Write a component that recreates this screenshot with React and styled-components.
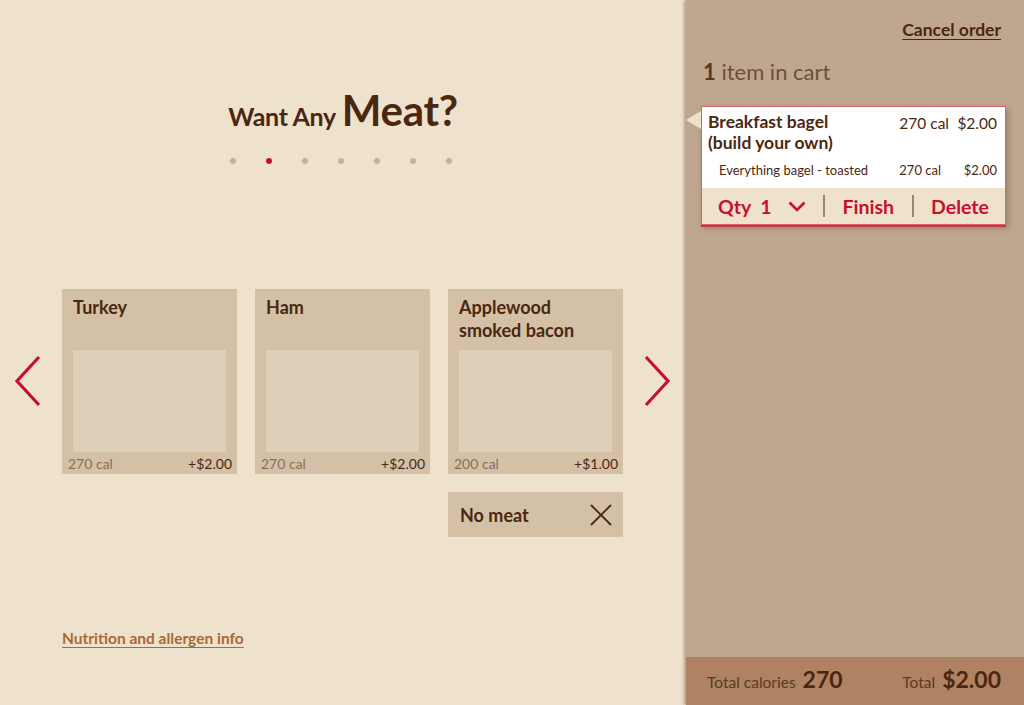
import styled, { createGlobalStyle } from "styled-components";

const GlobalStyle = createGlobalStyle`
  html, body {
    margin: 0;
    padding: 0;
    height: 100%;
  }
  body {
    font-family: "Lato", "Liberation Sans", sans-serif;
    color: #4b2711;
  }
  #root {
    height: 100%;
  }
`;

const meats = [
  { name: "Turkey", cal: "270 cal", price: "+$2.00" },
  { name: "Ham", cal: "270 cal", price: "+$2.00" },
  { name: "Applewood smoked bacon", cal: "200 cal", price: "+$1.00" },
];

function Chevron({ dir }) {
  const d = dir === "left" ? "M25 2 L3 26 L25 50" : "M2 2 L24 26 L2 50";
  return (
    <svg width="27" height="53" viewBox="0 0 27 53">
      <path d={d} fill="none" stroke="#c8102e" strokeWidth="3.2" />
    </svg>
  );
}

function App() {
  return (
    <>
      <GlobalStyle />
      <Screen>
        {/* ***** menu side ***** */}
        <Main>
          <Title>
            <small>Want Any</small> Meat?
          </Title>
          <Dots>
            {[0, 1, 2, 3, 4, 5, 6].map((i) => (
              <Dot key={i} active={i === 1} />
            ))}
          </Dots>

          <Carousel>
            <ArrowButton side="start">
              <Chevron dir="left" />
            </ArrowButton>
            {meats.map((m) => (
              <Card key={m.name}>
                <CardTitle>{m.name}</CardTitle>
                <Placeholder />
                <CardFooter>
                  <span>{m.cal}</span>
                  <Price>{m.price}</Price>
                </CardFooter>
              </Card>
            ))}
            <ArrowButton side="end">
              <Chevron dir="right" />
            </ArrowButton>
            <NoMeat>
              No meat
              <svg width="22" height="22" viewBox="0 0 22 22">
                <path d="M1 1 L21 21 M21 1 L1 21" stroke="#4b2711" strokeWidth="1.8" />
              </svg>
            </NoMeat>
          </Carousel>

          <NutritionLink href="#">Nutrition and allergen info</NutritionLink>
        </Main>

        {/* ***** cart side ***** */}
        <Sidebar>
          <SidebarBody>
            <CancelLink href="#">Cancel order</CancelLink>
            <CartCount>
              <strong>1</strong> item in cart
            </CartCount>
            <CartItem>
              <ItemTop>
                <ItemName>
                  Breakfast bagel
                  <br />
                  (build your own)
                </ItemName>
                <ItemFigure width="70px">270 cal</ItemFigure>
                <ItemFigure width="48px">$2.00</ItemFigure>
              </ItemTop>
              <SubLine>
                <SubName>Everything bagel - toasted</SubName>
                <SubFigure width="72px">270 cal</SubFigure>
                <SubFigure width="56px">$2.00</SubFigure>
              </SubLine>
              <ItemActions>
                <Action>
                  Qty&nbsp;&nbsp;1
                  <svg width="18" height="11" viewBox="0 0 18 11">
                    <path d="M1.5 1.5 L9 9 L16.5 1.5" fill="none" stroke="#c8102e" strokeWidth="2.6" />
                  </svg>
                </Action>
                <Divider />
                <Action>Finish</Action>
                <Divider />
                <Action>Delete</Action>
              </ItemActions>
            </CartItem>
          </SidebarBody>
          <Totals>
            <TotalGroup>
              Total calories <strong>270</strong>
            </TotalGroup>
            <TotalGroup>
              Total <strong>$2.00</strong>
            </TotalGroup>
          </Totals>
        </Sidebar>
      </Screen>
    </>
  );
}

export default App;

const Screen = styled.div`
  display: flex;
  width: 1024px;
  height: 705px;
  overflow: hidden;
`;

const Main = styled.div`
  flex: 1;
  display: flex;
  flex-direction: column;
  background: #efe2cc;
`;

const Title = styled.h1`
  margin: 85px 0 0;
  text-align: center;
  font-size: 42px;
  font-weight: 700;
  line-height: 50px;
  letter-spacing: -0.3px;

  > small {
    font-size: 25px;
    margin-right: -4px;
  }
`;

const Dots = styled.div`
  display: flex;
  justify-content: center;
  gap: 30px;
  margin: 17px 4px 0 0;
`;

const Dot = styled.span`
  width: 6px;
  height: 6px;
  border-radius: 50%;
  background: ${(p) => (p.active ? "#c8102e" : "#c4b09b")};
`;

const Carousel = styled.div`
  display: grid;
  grid-template-columns: 30px repeat(3, 175px) 30px;
  grid-template-rows: 185px 45px;
  column-gap: 18px;
  row-gap: 18px;
  margin: 125px 0 0 14px;
`;

const ArrowButton = styled.div`
  align-self: center;
  justify-self: ${(p) => p.side};
  display: flex;
  height: 53px;
`;

const Card = styled.div`
  display: flex;
  flex-direction: column;
  background: #d3c0a7;
  padding-top: 7px;
`;

const CardTitle = styled.div`
  height: 54px;
  padding: 0 11px;
  font-size: 18px;
  font-weight: 700;
  line-height: 23px;
`;

const Placeholder = styled.div`
  height: 102px;
  margin: 0 11px;
  background: #dfceb8;
`;

const CardFooter = styled.div`
  flex: 1;
  display: flex;
  align-items: center;
  justify-content: space-between;
  padding: 0 5px 0 6px;
  font-size: 14px;
  color: #8a6f57;
`;

const Price = styled.span`
  color: #4b2711;
`;

const NoMeat = styled.div`
  grid-column: 4;
  grid-row: 2;
  display: flex;
  align-items: center;
  justify-content: space-between;
  padding: 0 11px 0 12px;
  background: #d3c0a7;
  font-size: 18px;
  font-weight: 700;
`;

const NutritionLink = styled.a`
  margin: auto 0 58px 62px;
  font-size: 15.5px;
  font-weight: 700;
  color: #a8693a;
  text-decoration: underline;
  text-underline-offset: 3px;
`;

const Sidebar = styled.div`
  width: 338px;
  display: flex;
  flex-direction: column;
  background: #bfa68e;
  box-shadow: -2px 0 3px rgba(60, 35, 15, 0.35);
  position: relative;
`;

const SidebarBody = styled.div`
  flex: 1;
  display: flex;
  flex-direction: column;
  padding: 19px 18px 0 15px;
`;

const CancelLink = styled.a`
  align-self: flex-end;
  margin-right: 5px;
  font-size: 17.5px;
  font-weight: 700;
  color: #4b2711;
  text-decoration: underline;
  text-underline-offset: 3px;
`;

const CartCount = styled.div`
  margin: 18px 0 0 2px;
  font-size: 22px;
  color: #6e5038;

  > strong {
    color: #5a3a20;
  }
`;

const CartItem = styled.div`
  position: relative;
  margin-top: 21px;
  background: #fff;
  border: 1.5px solid #d46372;
  box-shadow: 0 2px 0 #c8344a, 2px 3px 6px rgba(60, 35, 15, 0.3);

  &::before {
    content: "";
    position: absolute;
    left: -16px;
    top: 4px;
    border-style: solid;
    border-width: 9px 15px 9px 0;
    border-color: transparent #efe2cc transparent transparent;
  }
`;

const ItemTop = styled.div`
  display: flex;
  align-items: flex-start;
  padding: 4px 8px 0 6px;
`;

const ItemName = styled.div`
  flex: 1;
  font-size: 17.5px;
  font-weight: 700;
  line-height: 21px;
`;

const ItemFigure = styled.div`
  width: ${(p) => p.width};
  text-align: right;
  font-size: 15.5px;
  line-height: 21px;
  padding-top: 2px;
`;

const SubLine = styled.div`
  display: flex;
  align-items: center;
  padding: 9px 8px 10px 17px;
  font-size: 13px;
`;

const SubName = styled.span`
  flex: 1;
`;

const SubFigure = styled.span`
  width: ${(p) => p.width};
  text-align: right;
`;

const ItemActions = styled.div`
  display: flex;
  align-items: center;
  justify-content: space-between;
  height: 36px;
  padding: 0 16px 0 16px;
  background: #efe2cc;
`;

const Action = styled.span`
  display: flex;
  align-items: center;
  gap: 16px;
  font-size: 19.5px;
  font-weight: 700;
  color: #c8102e;
`;

const Divider = styled.span`
  width: 2px;
  height: 22px;
  background: #9c8470;
`;

const Totals = styled.div`
  display: flex;
  align-items: center;
  justify-content: space-between;
  height: 48px;
  padding: 0 23px 5px 21px;
  box-sizing: border-box;
  background: #ae8262;
  font-size: 15.5px;
  color: #5a3a20;
`;

const TotalGroup = styled.div`
  display: flex;
  align-items: baseline;
  gap: 7px;

  > strong {
    font-size: 23px;
    color: #4b2711;
  }
`;
